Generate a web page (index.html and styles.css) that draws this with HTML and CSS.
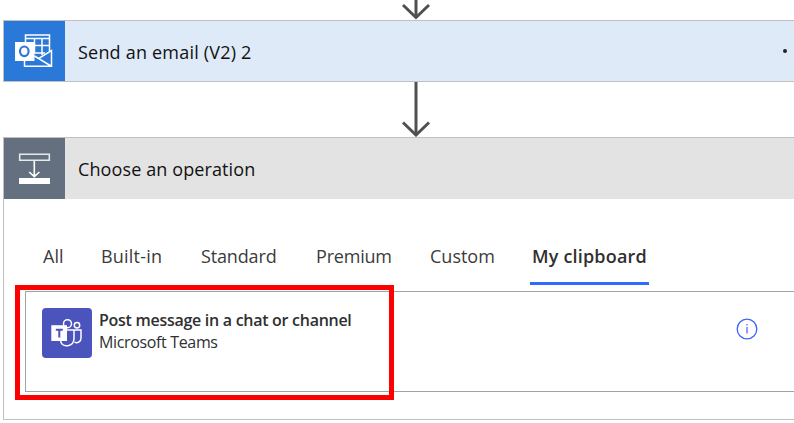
FILE: index.html
```html
<!DOCTYPE html>
<html lang="en">
<head>
<meta charset="utf-8">
<title>Flow designer</title>
<link rel="stylesheet" href="styles.css">
</head>
<body>
<main class="flow">
  <svg class="arrow arrow-top" viewBox="0 0 30 20"><path class="shaft" d="M15 0V18"/><path class="head" d="M2 5L15 17.500L28 5"/></svg>
  <section class="card email">
    <header class="bar">
      <div class="tile">
        <svg viewBox="0 0 61 60" fill="none" stroke="#fff" stroke-width="1.500">
          <path d="M21.500 21V14H45.500V30M30.500 17V32M38 17V34M22 17.500H45M30 24.500H45M30 32H41"/>
          <path d="M20.500 40V45.300H47.500V29.500L34.500 37.500L47 45M30.500 35L34.500 37.500"/>
          <path d="M11 21H30.500V40H11Z" fill="#fff" stroke="none"/>
          <ellipse cx="20.300" cy="30.300" rx="4.300" ry="4.800" stroke="#2a78d7" stroke-width="2.200"/>
        </svg>
      </div>
      <h2 class="title t-email">Send an email (V2) 2</h2>
      <span class="more"></span>
    </header>
  </section>
  <svg class="arrow arrow-mid" viewBox="0 0 30 55"><path class="shaft" d="M15 0V53"/><path class="head" d="M2 40.500L15 53L28 40.500"/></svg>
  <section class="card operation">
    <header class="bar">
      <div class="tile">
        <svg viewBox="0 0 61 61" fill="none" stroke="#fff">
          <path d="M15.700 16.200H45.300V22.300H15.700Z" stroke="#e4eaea" stroke-width="1.600"/>
          <path d="M30.300 23V38.500M25.200 34L30.300 38.700L35.400 34" stroke-width="1.600"/>
          <path d="M15 40H46V46H15Z" fill="#fff" stroke="none"/>
        </svg>
      </div>
      <h2 class="title t-choose">Choose an operation</h2>
    </header>
    <nav class="tabs">
      <span class="tab all">All</span>
      <span class="tab built">Built-in</span>
      <span class="tab standard">Standard</span>
      <span class="tab premium">Premium</span>
      <span class="tab custom">Custom</span>
      <span class="tab active">My clipboard</span>
    </nav>
    <div class="result">
      <div class="teams">
        <svg viewBox="0 0 50 50" fill="none" stroke="#fff" stroke-width="1.500">
          <circle cx="25.500" cy="15.700" r="4"/>
          <circle cx="35" cy="17.200" r="2.700"/>
          <path d="M18.500 33C20 40 32 39.500 32 30V22H39V30C39 33.500 36 35.500 32.500 34.300M24 22H32"/>
          <path d="M9.300 17.200H25V33H9.300Z" fill="#fff" stroke="none"/>
          <path d="M13.800 21.800H20.800M17.300 21.800V29.500" stroke="#4b53bc" stroke-width="2"/>
        </svg>
      </div>
      <div class="copy">
        <div class="name">Post message in a chat or channel</div>
        <div class="app">Microsoft Teams</div>
      </div>
      <svg class="info" viewBox="0 0 22 22" fill="none" stroke="#3b63fb"><circle cx="11" cy="11" r="9.800" stroke-width="1.300"/><path d="M11 9V15.500M11 6V7.500" stroke-width="1.500" stroke="#7b7bf5"/></svg>
    </div>
    <div class="highlight"></div>
  </section>
</main>
</body>
</html>
```

FILE: styles.css
```css
* { box-sizing: border-box; }
body { margin: 0; background: #fff; font-family: "Open Sans", "Noto Sans", sans-serif; overflow: hidden; }
.flow { width: 794px; height: 423px; padding-left: 3px; overflow: hidden; display: flex; flex-direction: column; }
svg { display: block; }
.arrow { flex: none; width: 30px; margin-left: 398px; fill: none; stroke: #505050; stroke-width: 3; }
.arrow-top { height: 20px; }
.arrow-mid { height: 55px; }
.card { position: relative; flex: none; border: 1px solid #c0c0c0; border-right: 0; }
.email { height: 62px; background: #deeaf8; }
.operation { height: 283px; }
.bar { display: flex; align-items: center; height: 61px; }
.email .bar { height: 60px; }
.operation .bar { background: #e3e3e3; }
.tile { width: 61px; height: 100%; background: #2a78d7; flex: none; }
.operation .tile { background: #647080; }
.title { margin: 0 0 0 13px; font-size: 18px; font-weight: 400; line-height: 24px; color: #111; white-space: nowrap; }
.t-email { letter-spacing: .2px; padding-top: 2px; }
.t-choose { letter-spacing: .11px; }
.more { width: 4px; height: 4px; border-radius: 50%; background: #222; margin: 0 7px 1px auto; }
.tabs { display: flex; height: 86px; padding: 42px 0 0 39px; font-size: 18px; line-height: 30px; color: #3b3b3b; white-space: nowrap; }
.tab { flex: none; }
.all { width: 58px; }
.built { width: 100px; letter-spacing: .2px; }
.standard { width: 115px; letter-spacing: -.15px; }
.premium { width: 114px; letter-spacing: -.2px; }
.custom { width: 100px; }
.active { width: 119px; padding-left: 2px; border-bottom: 3px solid #2f6bff; font-weight: 600; letter-spacing: .18px; color: #303030; }
.result { height: 101px; margin: 6px 0 0 21px; border: 1px solid #a2a2a2; border-right: 0; display: flex; padding: 16px 36px 0 16px; }
.teams { width: 50px; height: 50px; border-radius: 4px; background: #4b53bc; flex: none; }
.copy { padding: 1px 0 0 7px; font-size: 16px; line-height: 22px; color: #303030; white-space: nowrap; }
.name { font-weight: 600; letter-spacing: -.28px; }
.app { letter-spacing: -.35px; }
.info { width: 22px; height: 22px; margin: 10px 0 0 auto; }
.highlight { position: absolute; left: 11px; top: 147px; width: 379px; height: 115px; border: 5px solid #f00; }
```
